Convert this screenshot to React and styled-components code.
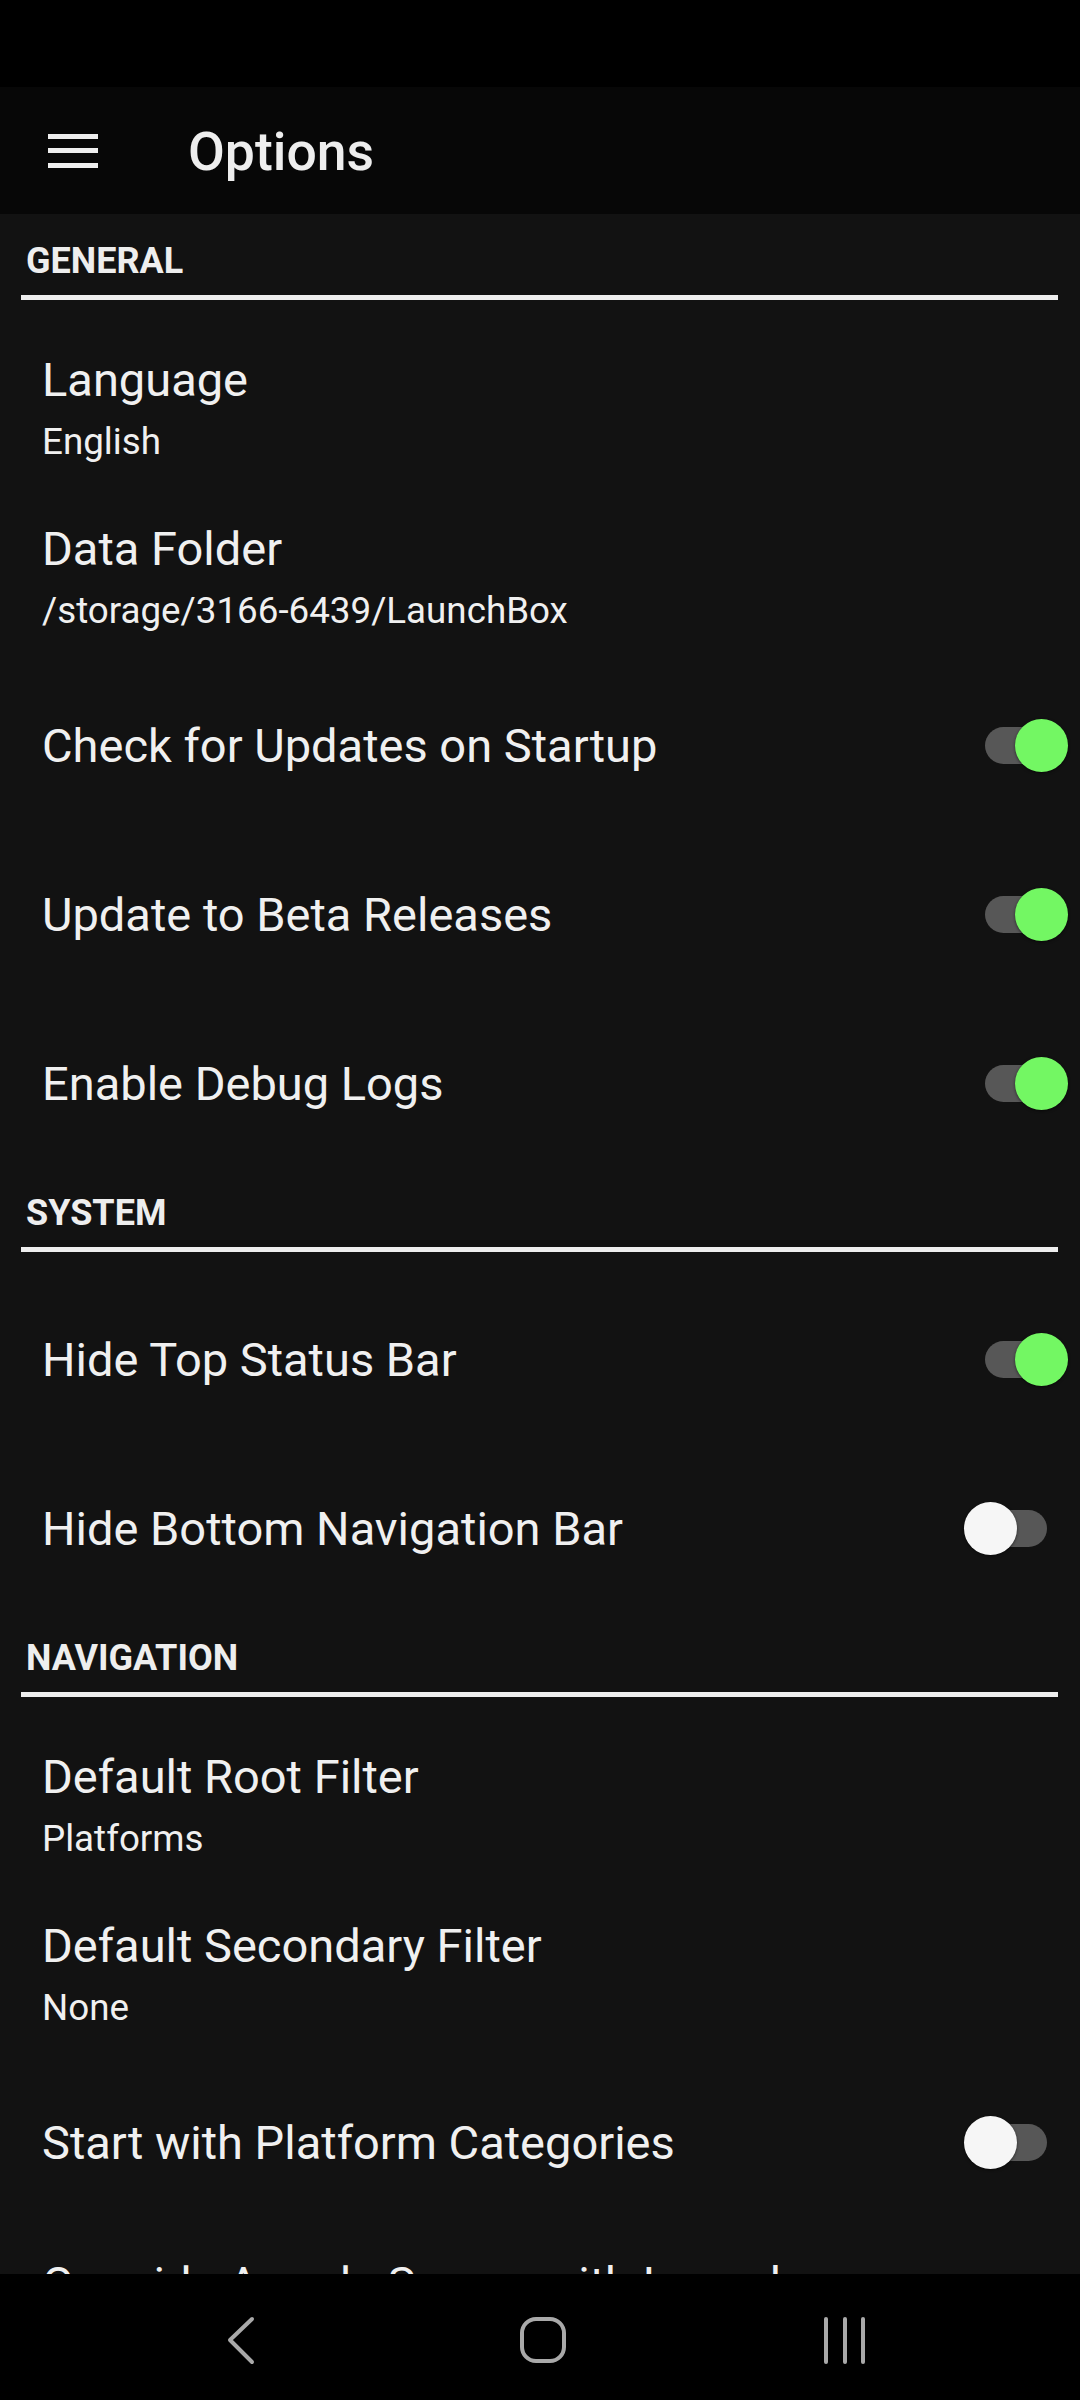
import React from 'react';
import styled, { createGlobalStyle } from 'styled-components';

const GlobalStyle = createGlobalStyle`
  html, body {
    margin: 0;
    padding: 0;
    background: #000;
  }
  * {
    box-sizing: border-box;
  }
`;

const Screen = styled.div`
  width: 1080px;
  height: 2400px;
  display: flex;
  flex-direction: column;
  background: #121212;
  font-family: Roboto, "Liberation Sans", sans-serif;
  color: #f0f0f0;
  overflow: hidden;
`;

const StatusBar = styled.div`
  height: 87px;
  flex-shrink: 0;
  background: #000;
`;

const AppBar = styled.header`
  height: 127px;
  flex-shrink: 0;
  display: flex;
  align-items: center;
  background: #070707;
  padding: 4px 0 0 48px;
`;

const MenuButton = styled.div`
  width: 50px;
  height: 34px;
  display: flex;
  flex-direction: column;
  justify-content: space-between;
  margin-top: -4px;

  span {
    display: block;
    height: 5px;
    background: #eeeeee;
  }
`;

const AppTitle = styled.h1`
  margin: 0 0 0 90px;
  font-size: 53.5px;
  font-weight: 500;
  color: #eeeeee;
  line-height: 1.172;
`;

const Content = styled.main`
  flex: 1;
  overflow: hidden;
`;

const SectionHeader = styled.div`
  margin: 0 22px 21px 21px;
  padding: 27px 0 13px 5px;
  border-bottom: 5px solid #eeeeee;
  font-size: 36px;
  font-weight: 700;
  line-height: 41px;
  color: #eeeeee;
`;

const Row = styled.div`
  height: 169px;
  display: flex;
  align-items: center;
  justify-content: space-between;
  padding: 3px 12px 0 42px;
`;

const TextBlock = styled.div`
  display: flex;
  flex-direction: column;
  gap: 13px;
`;

const Title = styled.div`
  font-size: 47px;
  line-height: 55px;
  color: #f0f0f0;
  white-space: nowrap;
`;

const Summary = styled.div`
  font-size: 36.75px;
  line-height: 43px;
  color: #f0f0f0;
  white-space: nowrap;
`;

const SwitchBox = styled.div`
  position: relative;
  width: 104px;
  height: 53px;
  flex-shrink: 0;
`;

const Track = styled.div`
  position: absolute;
  left: 21px;
  top: 8px;
  width: 62px;
  height: 37px;
  border-radius: 18.5px;
  background: #575757;
`;

const Thumb = styled.div`
  position: absolute;
  top: 0;
  left: ${(p) => (p.$on ? '51px' : '0')};
  width: 53px;
  height: 53px;
  border-radius: 50%;
  background: ${(p) => (p.$on ? '#73f763' : '#f6f6f6')};
  box-shadow: 0 1px 3px rgba(0, 0, 0, 0.55);
`;

const NavBar = styled.nav`
  height: 126px;
  flex-shrink: 0;
  background: #000;
  display: flex;
  align-items: center;
  justify-content: center;
  gap: 250px;
  padding: 6px 0 0 6px;
`;

const NavIcon = styled.svg`
  width: 52px;
  height: 52px;
  fill: none;
  stroke: #a9a9a9;
  stroke-width: 4;
  stroke-linecap: round;
  stroke-linejoin: round;
`;

const Switch = ({ on }) => (
  <SwitchBox>
    <Track />
    <Thumb $on={on} />
  </SwitchBox>
);

const Preference = ({ title, summary, toggle }) => (
  <Row>
    <TextBlock>
      <Title>{title}</Title>
      {summary && <Summary>{summary}</Summary>}
    </TextBlock>
    {toggle !== undefined && <Switch on={toggle} />}
  </Row>
);

const sections = [
  {
    name: 'GENERAL',
    items: [
      { title: 'Language', summary: 'English' },
      { title: 'Data Folder', summary: '/storage/3166-6439/LaunchBox' },
      { title: 'Check for Updates on Startup', toggle: true },
      { title: 'Update to Beta Releases', toggle: true },
      { title: 'Enable Debug Logs', toggle: true },
    ],
  },
  {
    name: 'SYSTEM',
    items: [
      { title: 'Hide Top Status Bar', toggle: true },
      { title: 'Hide Bottom Navigation Bar', toggle: false },
    ],
  },
  {
    name: 'NAVIGATION',
    items: [
      { title: 'Default Root Filter', summary: 'Platforms' },
      { title: 'Default Secondary Filter', summary: 'None' },
      { title: 'Start with Platform Categories', toggle: false },
      { title: 'Override Arcade Screen with Launcher', summary: 'Disabled' },
    ],
  },
];

export default function App() {
  return (
    <>
      <GlobalStyle />
      <Screen>
        <StatusBar />
        <AppBar>
          <MenuButton>
            <span />
            <span />
            <span />
          </MenuButton>
          <AppTitle>Options</AppTitle>
        </AppBar>
        <Content>
          {sections.map((s) => (
            <section key={s.name}>
              <SectionHeader>{s.name}</SectionHeader>
              {s.items.map((it) => (
                <Preference key={it.title} {...it} />
              ))}
            </section>
          ))}
        </Content>
        <NavBar>
          <NavIcon viewBox="0 0 52 52">
            <polyline points="37,5 15,26 37,48" />
          </NavIcon>
          <NavIcon viewBox="0 0 52 52">
            <rect x="5" y="5" width="42" height="42" rx="14" />
          </NavIcon>
          <NavIcon viewBox="0 0 52 52">
            <line x1="7" y1="5" x2="7" y2="48" />
            <line x1="26" y1="5" x2="26" y2="48" />
            <line x1="44" y1="5" x2="44" y2="48" />
          </NavIcon>
        </NavBar>
      </Screen>
    </>
  );
}
